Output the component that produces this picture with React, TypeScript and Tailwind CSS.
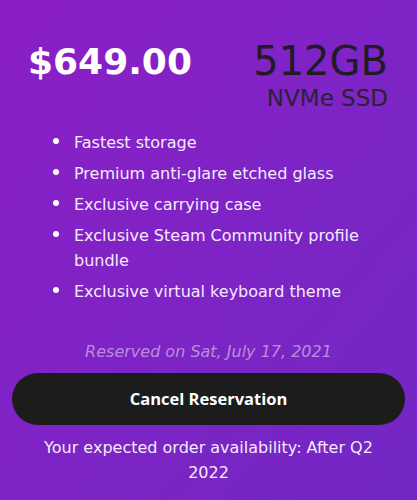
import React from "react";

const items = [
  "Fastest storage",
  "Premium anti-glare etched glass",
  "Exclusive carrying case",
  "Exclusive Steam Community profile bundle",
  "Exclusive virtual keyboard theme",
];

export default function App() {
  return (
    <div
      className="w-[417px] h-[500px] overflow-hidden bg-linear-to-br from-[#8b1ec6] to-[#7127c4] px-3 text-white"
      style={{ fontFamily: '"DejaVu Sans", "Open Sans", sans-serif' }}
    >
      <div className="flex justify-between items-start pl-4 pr-[17px] pt-[41px]">
        <div className="text-[36px] font-bold leading-[36px] mt-[3px]">$649.00</div>
        <div className="flex flex-col items-end">
          <div className="text-[40px] leading-[40px] text-[#1e1c24]">512GB</div>
          <div className="text-[23px] leading-[23px] text-[#2a2232] mt-[6px]">NVMe SSD</div>
        </div>
      </div>
      <ul className="mt-[20px] pl-[62px] pr-6 flex flex-col gap-[6px] text-[16px] leading-[25px] text-[#f6eafc]">
        {items.map((t) => (
          <li key={t} className="relative">
            <span className="absolute -left-[21px] top-[8px] w-[6px] h-[6px] rounded-full bg-white" />
            {t}
          </li>
        ))}
      </ul>
      <div className="mt-[36px] text-center italic text-[16px] leading-[24px] text-[#b98ddb]">
        Reserved on Sat, July 17, 2021
      </div>
      <button
        className="mt-[9px] w-full h-[52px] rounded-full bg-[#1c1c1c] text-white font-bold text-[16.5px]"
        style={{ fontFamily: '"Open Sans", sans-serif' }}
      >
        Cancel Reservation
      </button>
      <div className="mt-[10px] text-center text-[16px] leading-[25px] px-5 text-[#f6eafc]">
        Your expected order availability: After Q2 2022
      </div>
    </div>
  );
}
